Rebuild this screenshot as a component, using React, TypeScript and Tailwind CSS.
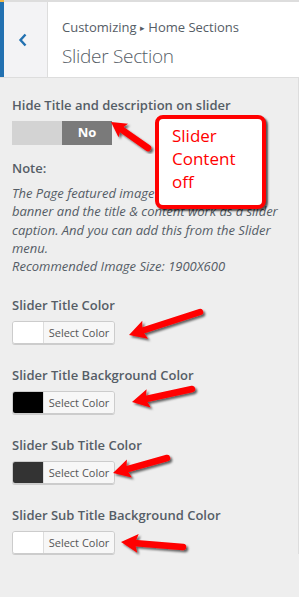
const FONT = { fontFamily: '"Open Sans", "Noto Sans", sans-serif' };

const COLOR_FIELDS = [
  { label: "Slider Title Color", swatch: "bg-white" },
  { label: "Slider Title Background Color", swatch: "bg-black" },
  { label: "Slider Sub Title Color", swatch: "bg-[#333333]" },
  { label: "Slider Sub Title Background Color", swatch: "bg-white" },
];

const ARROWS = [
  { x1: 148, y1: 148, x2: 111, y2: 122, head: 15 },
  { x1: 200, y1: 312, x2: 129, y2: 335, head: 17 },
  { x1: 192, y1: 389, x2: 132, y2: 402, head: 17 },
  { x1: 167, y1: 458, x2: 113, y2: 473, head: 17 },
  { x1: 183, y1: 547, x2: 121, y2: 542, head: 17 },
];

function Arrow({ x1, y1, x2, y2, head }: { x1: number; y1: number; x2: number; y2: number; head: number }) {
  const len = Math.hypot(x2 - x1, y2 - y1);
  const ux = (x2 - x1) / len;
  const uy = (y2 - y1) / len;
  const px = -uy;
  const py = ux;
  const w = head * 0.55;
  const bx = x2 - ux * head;
  const by = y2 - uy * head;
  const pts = [
    [x2, y2],
    [bx + px * w, by + py * w],
    [bx + ux * 3, by + uy * 3],
    [bx - px * w, by - py * w],
  ]
    .map((p) => p.join(","))
    .join(" ");

  return (
    <g filter="url(#shadow)">
      <line x1={x1} y1={y1} x2={bx + ux * 4} y2={by + uy * 4} stroke="#ff0000" strokeWidth={6.5} strokeLinecap="round" />
      <polygon points={pts} fill="#ff0000" />
    </g>
  );
}

function ColorField({ label, swatch }: { label: string; swatch: string }) {
  return (
    <div className="mb-[22px]">
      <div className="text-[13px] leading-[18px] font-semibold text-[#555d66]">{label}</div>
      <div className="mt-[7px] flex h-[23px] w-[103px] overflow-hidden rounded-[3px] border border-[#cccccc] shadow-[0_1px_0_#cccccc]">
        <span className={`w-[31px] border-r border-[#dddddd] ${swatch}`} />
        <span className="flex flex-1 items-center justify-center bg-[#f7f7f7] text-[11px] text-[#555555]">
          Select Color
        </span>
      </div>
    </div>
  );
}

export default function App() {
  return (
    <div className="relative h-[597px] w-[299px] overflow-hidden bg-[#eeeeee]" style={FONT}>
      {/* top strip */}
      <div className="flex h-[2px] bg-[#dddddd]">
        <span className="w-[4px] bg-[#f0b849]" />
      </div>

      {/* header */}
      <div className="flex h-[76px] border-b border-[#dddddd] bg-white">
        <div className="w-[4px] bg-[#2271b1]" />
        <div className="flex w-[44px] items-center justify-center border-r border-[#dddddd] bg-[#f3f3f5] pr-[5px]">
          <svg width="12" height="16" viewBox="0 0 12 16" fill="none">
            <path d="M8.5 2.5 3.5 8l5 5.5" stroke="#2271b1" strokeWidth="2.4" />
          </svg>
        </div>
        <div className="flex flex-col pl-[14px] pt-[15px]">
          <div className="text-[13px] leading-[20px] text-[#555d66]">
            Customizing <span className="text-[9px] align-[1px]">▸</span> Home Sections
          </div>
          <div className="mt-[5px] text-[19px] font-light leading-[26px] tracking-[-0.3px] text-[#555d66]">
            Slider Section
          </div>
        </div>
      </div>

      {/* body */}
      <div className="border-r border-[#dddddd] px-[12px] pt-[18px]">
        <div className="text-[13px] leading-[18px] font-semibold text-[#555d66]">
          Hide Title and description on slider
        </div>
        <div className="mt-[7px] flex h-[24px] w-[100px]">
          <span className="flex-1 bg-[#d3d3d3]" />
          <span className="flex flex-1 items-center justify-center bg-[#7a7a7a] text-[13px] font-bold text-white">No</span>
        </div>

        <div className="mt-[14px] text-[13px] leading-[18px] font-semibold text-[#555d66]">Note:</div>
        <p className="mt-[7px] whitespace-nowrap text-[13px] italic leading-[18.3px] text-[#555d66]">
          The Page featured image
          <br />
          banner and the title &amp; content work as a slider
          <br />
          caption. And you can add this from the Slider
          <br />
          menu.
          <br />
          Recommended Image Size: 1900X600
        </p>

        <div className="mt-[21px]">
          {COLOR_FIELDS.map((f) => (
            <ColorField key={f.label} label={f.label} swatch={f.swatch} />
          ))}
        </div>
      </div>

      {/* annotation callout */}
      <div className="absolute left-[155px] top-[115px] flex h-[94px] w-[111px] flex-col rounded-[8px] border-[4px] border-[#ff0000] bg-white pl-[13px] pt-[5px] shadow-[2px_2px_2px_rgba(0,0,0,0.65)]">
        <span className="text-[17px] leading-[23px] text-[#ff0000]">Slider</span>
        <span className="text-[17px] leading-[23px] text-[#ff0000]">Content</span>
        <span className="text-[17px] leading-[23px] text-[#ff0000]">off</span>
      </div>

      {/* annotation arrows */}
      <svg className="pointer-events-none absolute left-0 top-0" width="299" height="597">
        <defs>
          <filter id="shadow" x="-20%" y="-20%" width="140%" height="140%">
            <feDropShadow dx="2" dy="2" stdDeviation="1.3" floodColor="#000" floodOpacity="0.6" />
          </filter>
        </defs>
        {ARROWS.map((a, i) => (
          <Arrow key={i} {...a} />
        ))}
      </svg>
    </div>
  );
}
